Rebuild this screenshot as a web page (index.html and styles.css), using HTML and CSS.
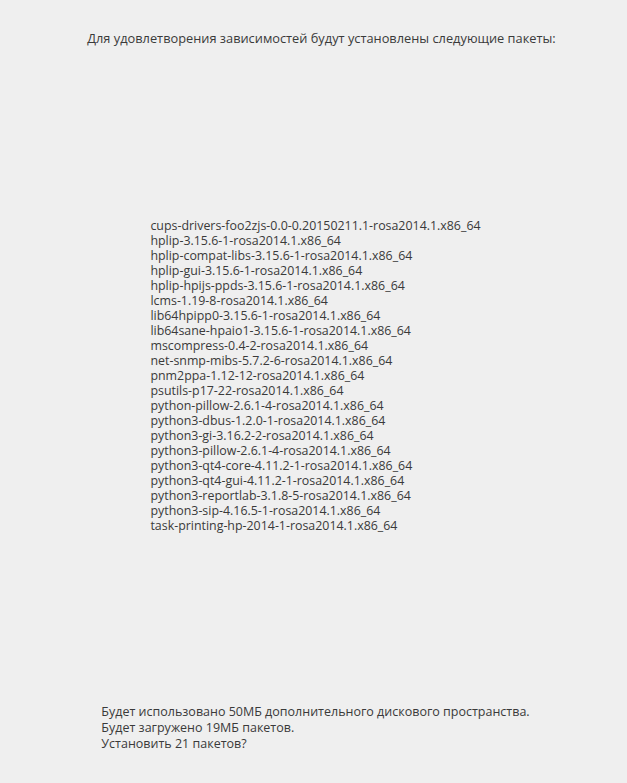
FILE: index.html
```html
<!DOCTYPE html>
<html lang="ru">
<head>
<meta charset="UTF-8">
<meta name="viewport" content="width=device-width, initial-scale=1.0">
<title>Установка пакетов</title>
<link rel="stylesheet" href="styles.css">
</head>
<body>
  <div class="dialog">
    <div class="header">
      <p>Для удовлетворения зависимостей будут установлены следующие пакеты:</p>
    </div>
    <div class="packages">
      <ul class="package-list">
        <li>cups-drivers-foo2zjs-0.0-0.20150211.1-rosa2014.1.x86_64</li>
        <li>hplip-3.15.6-1-rosa2014.1.x86_64</li>
        <li>hplip-compat-libs-3.15.6-1-rosa2014.1.x86_64</li>
        <li>hplip-gui-3.15.6-1-rosa2014.1.x86_64</li>
        <li>hplip-hpijs-ppds-3.15.6-1-rosa2014.1.x86_64</li>
        <li>lcms-1.19-8-rosa2014.1.x86_64</li>
        <li>lib64hpipp0-3.15.6-1-rosa2014.1.x86_64</li>
        <li>lib64sane-hpaio1-3.15.6-1-rosa2014.1.x86_64</li>
        <li>mscompress-0.4-2-rosa2014.1.x86_64</li>
        <li>net-snmp-mibs-5.7.2-6-rosa2014.1.x86_64</li>
        <li>pnm2ppa-1.12-12-rosa2014.1.x86_64</li>
        <li>psutils-p17-22-rosa2014.1.x86_64</li>
        <li>python-pillow-2.6.1-4-rosa2014.1.x86_64</li>
        <li>python3-dbus-1.2.0-1-rosa2014.1.x86_64</li>
        <li>python3-gi-3.16.2-2-rosa2014.1.x86_64</li>
        <li>python3-pillow-2.6.1-4-rosa2014.1.x86_64</li>
        <li>python3-qt4-core-4.11.2-1-rosa2014.1.x86_64</li>
        <li>python3-qt4-gui-4.11.2-1-rosa2014.1.x86_64</li>
        <li>python3-reportlab-3.1.8-5-rosa2014.1.x86_64</li>
        <li>python3-sip-4.16.5-1-rosa2014.1.x86_64</li>
        <li>task-printing-hp-2014-1-rosa2014.1.x86_64</li>
      </ul>
    </div>
    <div class="summary">
      <div class="summary-text">
        <p>Будет использовано 50МБ дополнительного дискового пространства.</p>
        <p>Будет загружено 19МБ пакетов.</p>
        <p>Установить 21 пакетов?</p>
      </div>
    </div>
  </div>
</body>
</html>
```

FILE: styles.css
```css
html, body {
  margin: 0;
  padding: 0;
  height: 100%;
}

body {
  font-family: "Open Sans", "Noto Sans", sans-serif;
  font-size: 12.4px;
  color: #3a3a3a;
  background-color: #efefef;
}

p {
  margin: 0;
}

.dialog {
  display: flex;
  flex-direction: column;
  height: 783px;
  padding-left: 4px;
  box-sizing: border-box;
}

.header {
  padding-top: 30px;
  padding-left: 12px;
  font-size: 12.8px;
  line-height: 16px;
  text-align: center;
}

.packages {
  flex: 1;
  display: flex;
  align-items: center;
  justify-content: center;
}

.package-list {
  list-style: none;
  margin: 0;
  padding: 0;
  line-height: 15px;
}

.summary {
  display: flex;
  justify-content: center;
  padding-bottom: 31px;
  font-size: 12.5px;
  line-height: 16px;
}
```
